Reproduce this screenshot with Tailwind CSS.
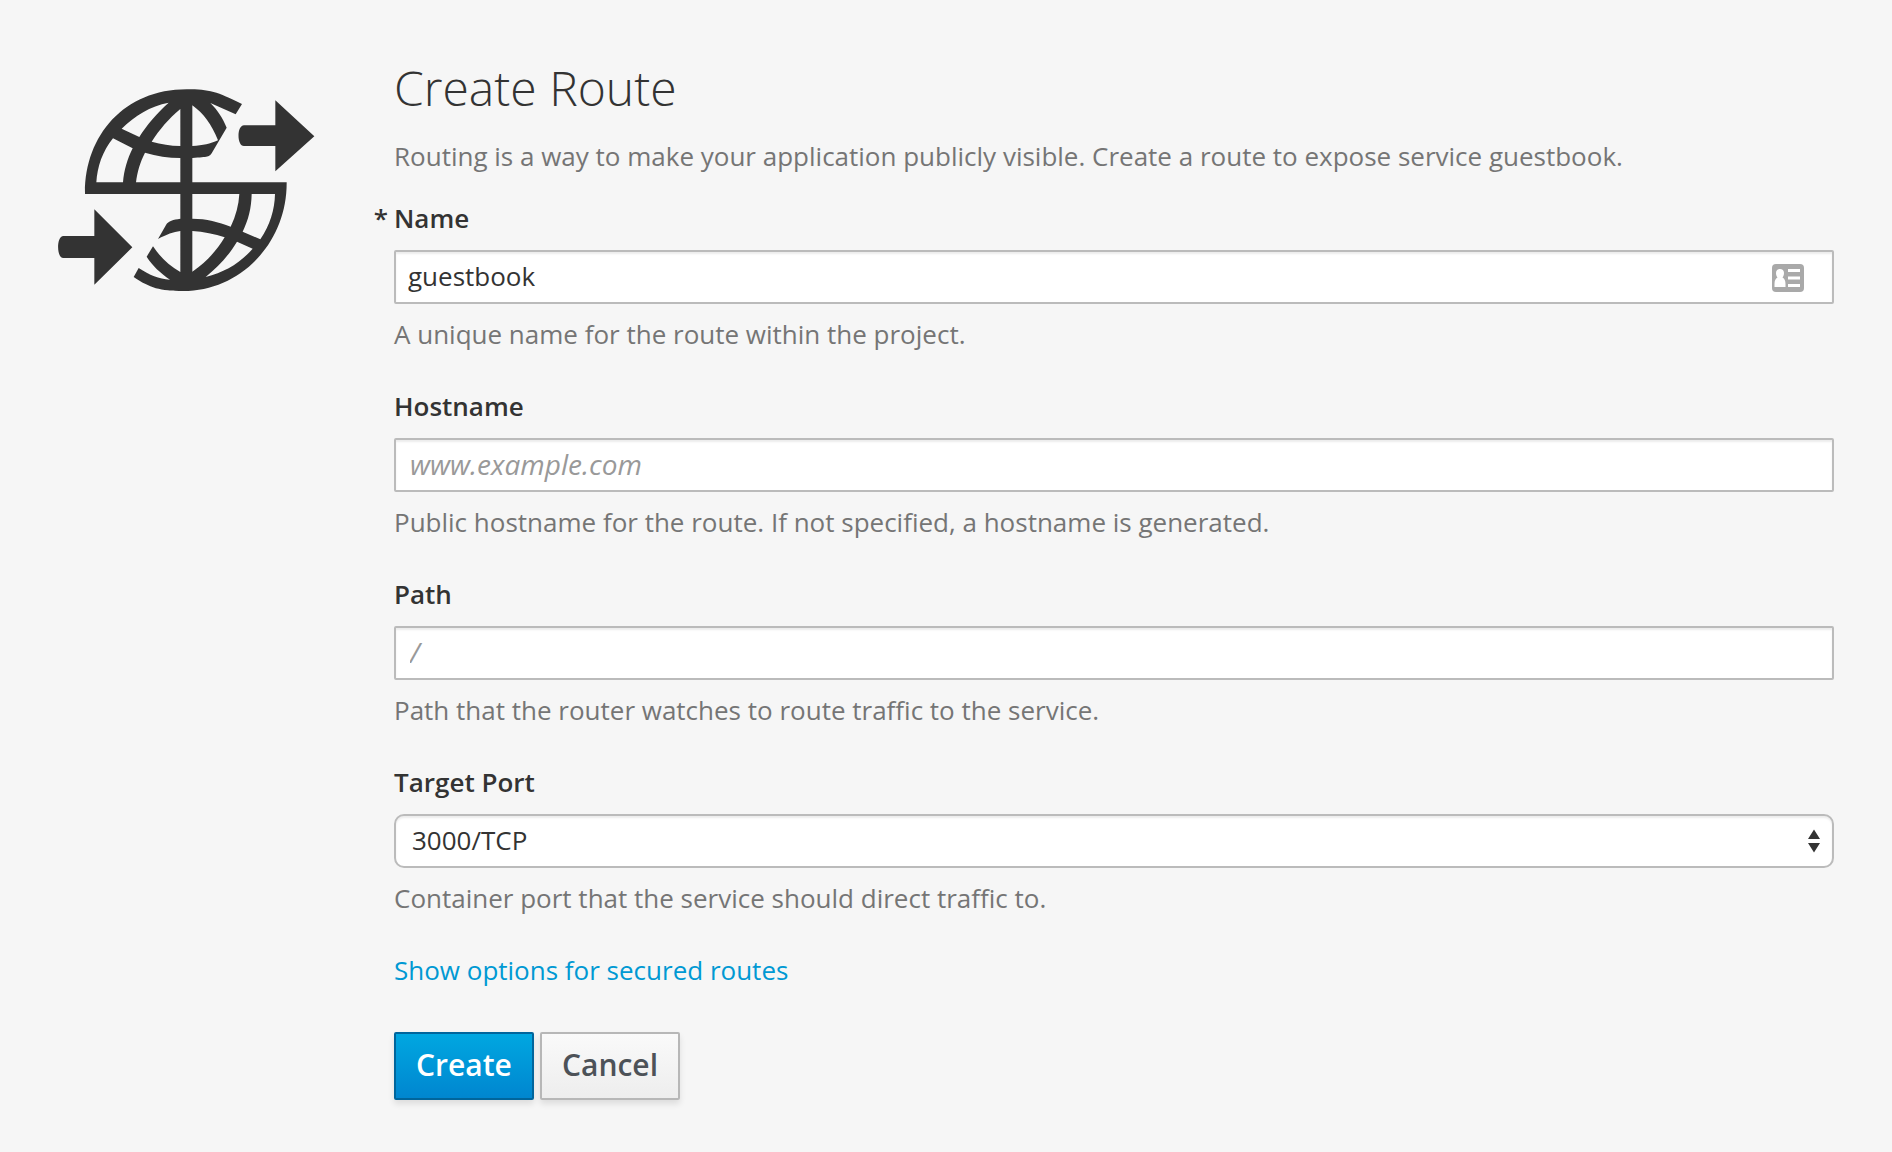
<!DOCTYPE html>
<html lang="en">
<head>
<meta charset="utf-8">
<meta name="viewport" content="width=device-width, initial-scale=1">
<title>Create Route</title>
<script src="https://cdn.jsdelivr.net/npm/@tailwindcss/browser@4"></script>
</head>
<body class="min-h-screen bg-[#f6f6f6] font-['Open_Sans',sans-serif] text-[26px] leading-[44px] text-[#333]">
<main class="flex items-start gap-[78px] pt-[60px] pr-[58px] pb-[52px] pl-14">
  <svg class="mt-[29px] w-[260px] shrink-0" viewBox="48 57 780 606" fill="#333" aria-hidden="true">
    <!-- split globe -->
    <path fill-rule="evenodd" d="M135 372C133 200 250 58 440 58C510 58 530 65 606 102L587 133L511 99C533 120 548 145 560 173L515 250C509 260 505 261 457 264V337H740C741 520 600 663 430 663C360 663 330 654 281 621L296 594C330 616 355 626 390 629C360 608 338 588 320 560L339 529C360 560 385 586 421 606V483C400 486 380 493 354 507L378 465C385 452 400 449 421 446V372Z
      M245 176C285 137 330 108 386 98C350 130 320 165 298 201Z
      M421 117V228C390 227 365 223 335 215C360 177 385 147 421 117Z
      M457 106C490 130 515 163 534 211C510 222 490 226 457 228Z
      M219 205L278 235C262 267 252 300 249 337H169C172 290 187 245 219 205Z
      M315 248C350 259 385 263 421 264V337H288C292 305 300 278 315 248Z
      M457 372H598C596 405 588 437 572 470C535 456 500 446 457 446Z
      M635 372H705C704 420 690 465 661 508L608 485C625 450 634 415 635 372Z
      M457 483C490 485 525 492 554 502C530 542 500 575 457 605Z
      M591 515L638 536C600 580 555 606 497 621C535 590 565 558 591 515Z"/>
    <!-- outgoing and incoming arrows -->
    <path d="M612 166H706V91L823 199L706 304V228H612C590 228 590 166 612 166Z"/>
    <path d="M70 498H163V418L277 532L163 644V564H70C49 564 49 498 70 498Z"/>
  </svg>

  <form class="min-w-0 flex-1">
    <h1 class="mb-[18px] text-[48px] leading-[56px] font-light">Create Route</h1>
    <p class="mb-[18px] text-[#757575]">Routing is a way to make your application publicly visible. Create a route to expose service guestbook.</p>

    <div class="flex flex-col gap-7">
      <div>
        <label for="name" class="relative block font-semibold"><span class="absolute right-full mr-1.5">*</span>Name</label>
        <div class="relative mt-2.5">
          <input id="name" type="text" value="guestbook" required class="block h-[54px] w-full rounded-xs border-2 border-[#bbb] bg-white pr-20 pb-0.5 pl-3 shadow-[inset_0_2px_2px_rgba(0,0,0,0.075)] outline-none">
          <svg class="absolute top-3.5 right-[30px] h-7 w-8" viewBox="0 0 32 28" aria-hidden="true">
            <rect width="32" height="28" rx="4" fill="#a9a9a9"/>
            <path fill="#fff" d="M8 5C10.400 5 12 6.600 12 9C12 11 11.200 12.500 10.500 13.600C12.600 14.800 13.500 17 13.500 20V23H2.500V20C2.500 17 3.400 14.800 5.500 13.600C4.800 12.500 4 11 4 9C4 6.600 5.600 5 8 5ZM16 5H28V8H16ZM16 12.500H28V15.500H16ZM16 20H28V23H16Z"/>
          </svg>
        </div>
        <p class="mt-2 text-[#757575]">A unique name for the route within the project.</p>
      </div>

      <div>
        <label for="host" class="block font-semibold">Hostname</label>
        <input id="host" type="text" placeholder="www.example.com" class="mt-2.5 block h-[54px] w-full rounded-xs border-2 border-[#bbb] bg-white px-3.5 pb-0.5 text-[28px] shadow-[inset_0_2px_2px_rgba(0,0,0,0.075)] outline-none placeholder:text-[#999] placeholder:italic">
        <p class="mt-2 text-[#757575]">Public hostname for the route. If not specified, a hostname is generated.</p>
      </div>

      <div>
        <label for="path" class="block font-semibold">Path</label>
        <input id="path" type="text" placeholder="/" class="mt-2.5 block h-[54px] w-full rounded-xs border-2 border-[#bbb] bg-white px-3.5 pb-0.5 text-[28px] shadow-[inset_0_2px_2px_rgba(0,0,0,0.075)] outline-none placeholder:text-[#999] placeholder:italic">
        <p class="mt-2 text-[#757575]">Path that the router watches to route traffic to the service.</p>
      </div>

      <div>
        <label for="port" class="block font-semibold">Target Port</label>
        <div class="relative mt-2.5">
          <select id="port" class="block h-[54px] w-full appearance-none rounded-[10px] border-2 border-[#bbb] bg-white px-4 pb-0.5 shadow-[inset_0_2px_2px_rgba(0,0,0,0.075)] outline-none">
            <option>3000/TCP</option>
          </select>
          <svg class="pointer-events-none absolute top-[15px] right-3.5 h-6 w-3" viewBox="0 0 12 24" fill="#333" aria-hidden="true"><path d="M6 0.500L12 10H0ZM0 14H12L6 23.500Z"/></svg>
        </div>
        <p class="mt-2 text-[#757575]">Container port that the service should direct traffic to.</p>
      </div>

      <div><a href="#" class="block w-fit text-[#0099d3]">Show options for secured routes</a></div>
    </div>

    <div class="mt-10 flex gap-1.5">
      <button type="submit" class="h-[68px] w-[140px] rounded-xs border-2 border-[#00659c] bg-linear-to-b from-[#00a8e1] to-[#0085cf] bg-origin-border pb-0.5 text-[30px] leading-[44px] font-semibold text-white shadow-[0_4px_6px_rgba(3,3,3,0.1)]">Create</button>
      <button type="button" class="h-[68px] w-[140px] rounded-xs border-2 border-[#b7b7b7] bg-linear-to-b from-[#fafafa] to-[#ededed] bg-origin-border pb-0.5 text-[30px] leading-[44px] font-semibold text-[#4d5258] shadow-[0_4px_6px_rgba(3,3,3,0.1)]">Cancel</button>
    </div>
  </form>
</main>
</body>
</html>
